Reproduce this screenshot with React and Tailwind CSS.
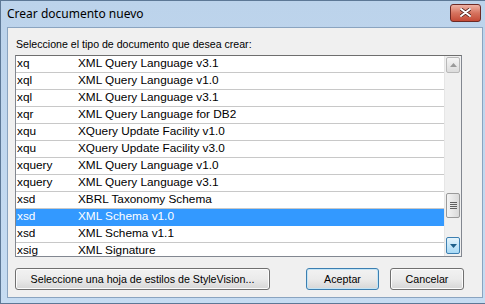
const rows = [
  ["xq", "XML Query Language v3.1"],
  ["xql", "XML Query Language v1.0"],
  ["xql", "XML Query Language v3.1"],
  ["xqr", "XML Query Language for DB2"],
  ["xqu", "XQuery Update Facility v1.0"],
  ["xqu", "XQuery Update Facility v3.0"],
  ["xquery", "XML Query Language v1.0"],
  ["xquery", "XML Query Language v3.1"],
  ["xsd", "XBRL Taxonomy Schema"],
  ["xsd", "XML Schema v1.0"],
  ["xsd", "XML Schema v1.1"],
  ["xsig", "XML Signature"],
];

function Button({ children, className = "", primary = false }) {
  return (
    <button
      className={
        "h-[22px] rounded-[3px] border bg-gradient-to-b from-[#f2f2f2] via-[#ebebeb] to-[#d6d6d6] text-[10.7px] text-black " +
        (primary ? "border-[#3c7fb1] shadow-[inset_0_0_0_1px_#c4e5f6]" : "border-[#707070] shadow-[inset_0_0_0_1px_#fcfcfc]") +
        " " +
        className
      }
    >
      {children}
    </button>
  );
}

function Scrollbar() {
  return (
    <div className="flex w-[17px] flex-col bg-[#f0f0f0] border-l border-[#e6e6e6]">
      <div className="mx-[1px] mt-[1px] flex h-[16px] items-center justify-center rounded-[2px] border border-[#b8b8b8] bg-gradient-to-b from-[#f5f5f5] to-[#dcdcdc]">
        <svg width="7" height="4" viewBox="0 0 7 4">
          <path d="M0 4 L3.5 0 L7 4 Z" fill="#9a9a9a" />
        </svg>
      </div>
      <div className="h-[120px]" />
      <div className="mx-[1px] flex h-[25px] items-center justify-center rounded-[2px] border border-[#9a9a9a] bg-gradient-to-r from-[#f4f4f4] to-[#dadada]">
        <div className="flex flex-col gap-[1px]">
          <div className="h-[1px] w-[7px] bg-[#606060]" />
          <div className="h-[1px] w-[7px] bg-[#606060]" />
          <div className="h-[1px] w-[7px] bg-[#606060]" />
          <div className="h-[1px] w-[7px] bg-[#606060]" />
        </div>
      </div>
      <div className="h-[19px]" />
      <div className="mx-[1px] flex h-[17px] items-center justify-center rounded-[2px] border border-[#3c7fb1] bg-gradient-to-b from-[#e5f4fc] to-[#a7d9f5]">
        <svg width="7" height="4" viewBox="0 0 7 4">
          <path d="M0 0 L3.5 4 L7 0 Z" fill="#1d5f8a" />
        </svg>
      </div>
    </div>
  );
}

export default function App() {
  return (
    <div
      className="flex h-[304px] w-[485px] flex-col overflow-hidden bg-gradient-to-b from-[#bcd3eb] to-[#c6dcf2] border-l border-t border-b border-[#5d7896]"
      style={{ fontFamily: '"Liberation Sans", Arial, sans-serif' }}
    >
      <div className="flex h-[26px] items-center justify-between pl-[6px] pr-[4px]">
        <span className="text-[12px] text-black" style={{ fontFamily: '"Noto Sans", sans-serif' }}>
          Crear documento nuevo
        </span>
        <div className="mt-[-3px] flex h-[18px] w-[31px] items-center justify-center rounded-[3px] border border-[#6d2a25] bg-gradient-to-b from-[#eeb3a6] via-[#d6735f] to-[#c44a36]">
          <svg width="11" height="9" viewBox="0 0 11 9">
            <path d="M1 1 L10 8 M10 1 L1 8" stroke="#4b1a14" strokeWidth="3.4" strokeLinecap="round" />
            <path d="M1 1 L10 8 M10 1 L1 8" stroke="#ffffff" strokeWidth="2" strokeLinecap="round" />
          </svg>
        </div>
      </div>
      <div className="ml-[6px] mr-[2px] mb-[5px] flex flex-1 flex-col border border-[#8aa4c0] bg-[#f0f0f0] px-[7px]">
        <div className="mt-[10px] h-[13px] text-[10.6px] leading-[13px] text-black pl-[1px]">
          Seleccione el tipo de documento que desea crear:
        </div>
        <div className="mt-[4px] flex h-[202px] w-[447px] border border-[#828790] border-t-[#6e6e6e] bg-white">
          <div className="flex-1 overflow-hidden">
            {rows.map(([ext, name], i) => (
              <div
                key={i}
                className={
                  "flex h-[17px] items-center border-b text-[11.8px] " +
                  (i === 9 ? "bg-[#3399ff] text-white border-[#3399ff]" : "border-[#c8c8c8] text-black")
                }
              >
                <span className="w-[62px] pl-[1px]">{ext}</span>
                <span>{name}</span>
              </div>
            ))}
          </div>
          <Scrollbar />
        </div>
        <div className="mt-[11px] flex items-center">
          <Button className="w-[255px]">Seleccione una hoja de estilos de StyleVision...</Button>
          <Button primary className="ml-[36px] w-[73px]">Aceptar</Button>
          <Button className="ml-[11px] w-[74px]">Cancelar</Button>
        </div>
      </div>
    </div>
  );
}
